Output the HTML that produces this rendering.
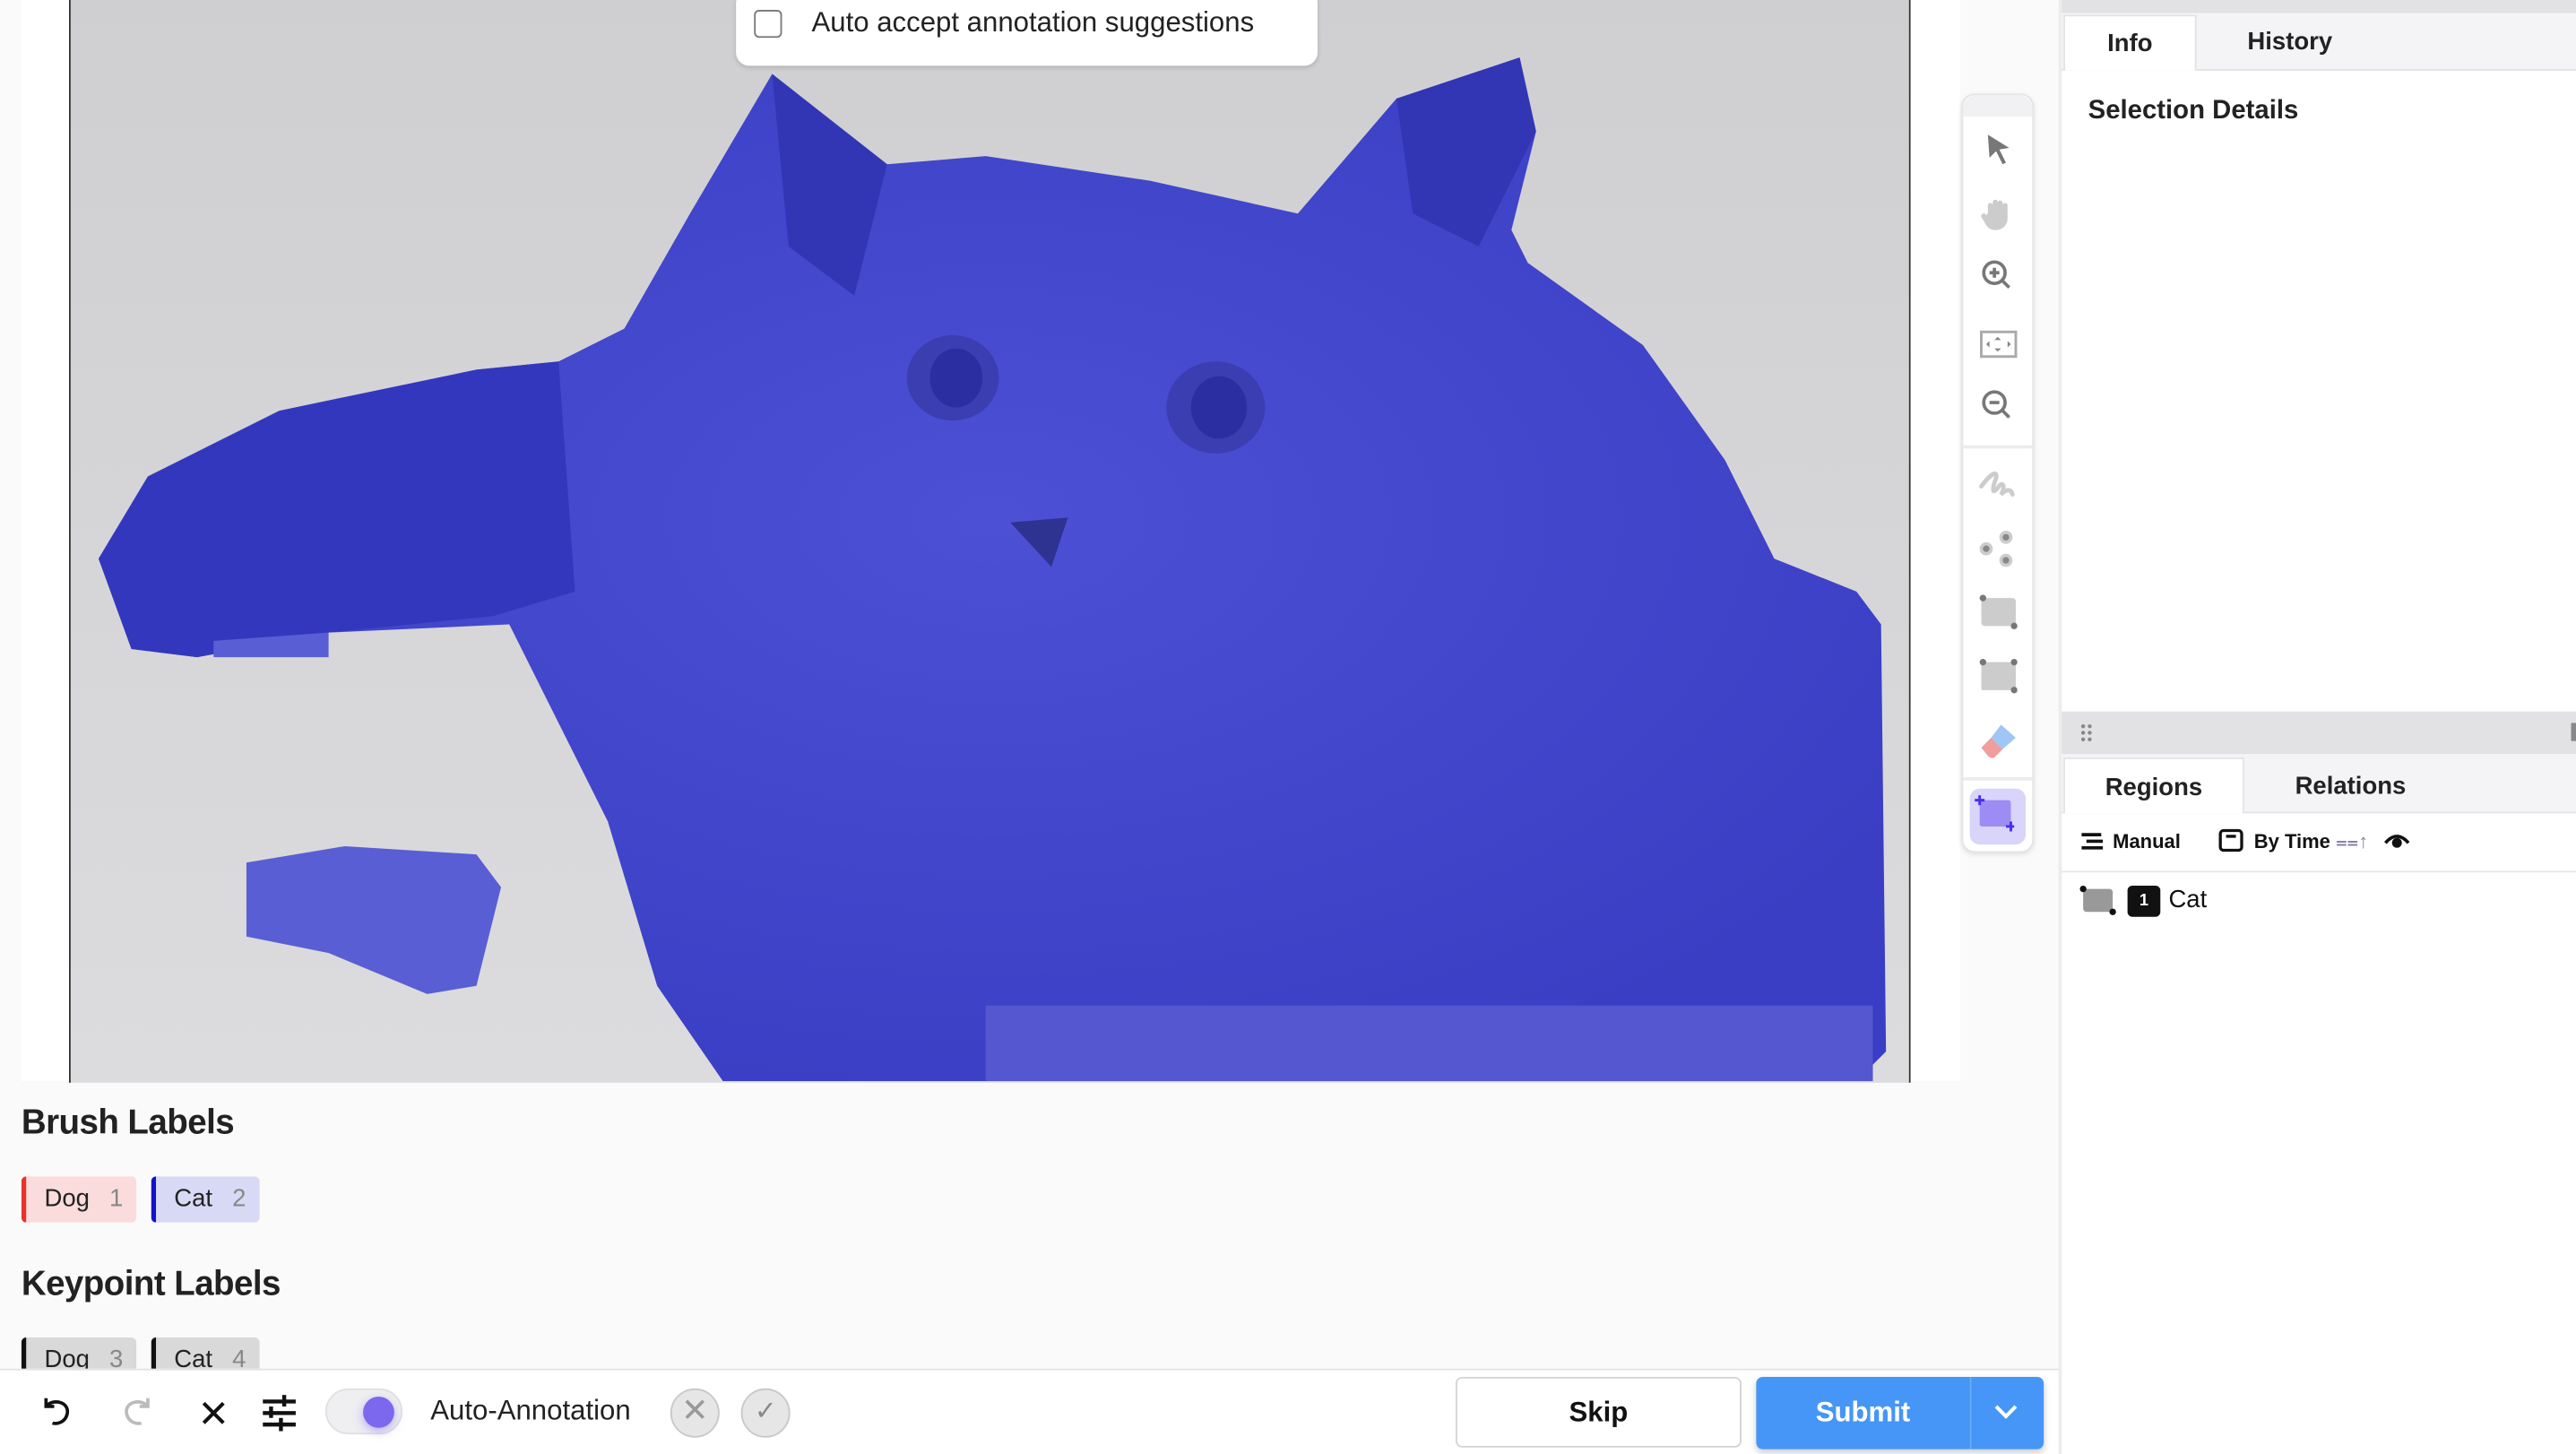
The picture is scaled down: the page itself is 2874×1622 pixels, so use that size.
<!DOCTYPE html>
<html><head><meta charset="utf-8"><style>
*{box-sizing:border-box;margin:0;padding:0}
html,body{width:2874px;height:1622px;overflow:hidden;background:#fafafa;font-family:"Liberation Sans",sans-serif}
#w{width:1568px;height:885px;transform:scale(1.83291);transform-origin:0 0;position:relative;background:#fafafa}
.a{position:absolute}
.tb{position:absolute;left:1204px;width:24px;height:24px}
.lab{position:absolute;height:28px;border-radius:3px;font-size:15px;line-height:28px;padding-left:11px;color:#222}
.lab span{color:#888;margin-left:12px}
</style></head><body><div id="w">
<div class="a" style="left:13px;top:0;width:1180px;height:658px;background:#fff"></div>
<svg class="a" style="left:42px;top:0" width="1121" height="659" viewBox="42 0 1121 659">
<defs><radialGradient id="g" cx="0.5" cy="0.45" r="0.6"><stop offset="0" stop-color="#4c50d4"/><stop offset="1" stop-color="#3a3ec4"/></radialGradient>
<linearGradient id="bg" x1="0" y1="0" x2="0" y2="1"><stop offset="0" stop-color="#cfcfd1"/><stop offset="1" stop-color="#dcdcde"/></linearGradient></defs>
<rect x="42" y="0" width="1121" height="659" fill="url(#bg)"/>
<line x1="42.5" y1="0" x2="42.5" y2="659" stroke="#333"/><line x1="1162.5" y1="0" x2="1162.5" y2="659" stroke="#333"/>
<path d="M470,45 L540,100 600,95 700,110 790,130 850,60 925,35 935,80 920,140 930,160 1000,210 1050,280 1080,340 1130,360 1145,380 1148,640 1130,658 440,658 400,600 370,500 330,420 310,380 200,385 120,400 80,395 60,340 90,290 170,250 290,225 340,220 380,200 420,130 Z" fill="url(#g)"/>
<path d="M60,340 90,290 170,250 290,225 340,220 350,360 300,375 200,385 120,400 80,395Z" fill="#3337bd"/>
<path d="M470,45 540,100 520,180 480,150Z M850,60 925,35 935,80 900,150 860,130Z" fill="#3236b4"/>
<path d="M150,525 L210,515 290,520 305,540 290,600 260,605 200,580 150,570Z" fill="#5a5ed4"/>
<path d="M130,390 200,385 200,400 130,400Z" fill="#5a5ed4"/>
<ellipse cx="580" cy="230" rx="28" ry="26" fill="#3a3eb0"/><ellipse cx="582" cy="230" rx="16" ry="18" fill="#2a2ea0"/>
<ellipse cx="740" cy="248" rx="30" ry="28" fill="#3a3eb0"/><ellipse cx="742" cy="248" rx="17" ry="19" fill="#2a2ea0"/>
<path d="M615,318 650,315 640,345Z" fill="#2e3290"/>
<rect x="600" y="612" width="540" height="46" fill="#5457cf"/>
</svg>
<div class="a" style="left:448px;top:-6px;width:354px;height:46px;background:#fff;border-radius:8px;box-shadow:0 1px 3px rgba(0,0,0,.15)"></div>
<div class="a" style="left:459px;top:6px;width:17px;height:17px;border:1.5px solid #777;border-radius:3px"></div>
<div class="a" style="left:494px;top:4px;font-size:17px;color:#222">Auto accept annotation suggestions</div>
<!-- toolbar -->
<div class="a" style="left:1194px;top:57px;width:44px;height:462px;background:#fff;border:1px solid #e5e5e8;border-radius:8px;box-shadow:0 1px 3px rgba(0,0,0,.1)"></div>
<div class="a" style="left:1195px;top:58px;width:42px;height:13px;background:#f1f1f3;border-radius:8px 8px 0 0"></div>
<div class="a" style="left:1195px;top:271px;width:42px;height:2px;background:#ececee"></div>
<div class="a" style="left:1195px;top:473px;width:42px;height:2px;background:#ececee"></div>
<svg class="tb" style="top:79px" viewBox="0 0 24 24"><path d="M6,3 L19,11 13,12 17,20 15,21 11,13 7,17Z" fill="#777"/></svg>
<svg class="tb" style="top:118px" viewBox="0 0 24 24"><path d="M6,12 V7 a1.5,1.5 0 0 1 3,0 V5 a1.5,1.5 0 0 1 3,0 V5.5 a1.5,1.5 0 0 1 3,0 V7 a1.5,1.5 0 0 1 3,0 V15 a7,7 0 0 1 -7,7 h-1 a6,6 0 0 1 -5,-3 L2,14 a1.5,1.5 0 0 1 3,-1Z" fill="#ccc"/></svg>
<svg class="tb" style="top:156px" viewBox="0 0 24 24" fill="none" stroke="#777" stroke-width="2"><circle cx="10" cy="10" r="6.5"/><path d="M15,15 L19,19 M10,7 V13 M7,10 H13"/></svg>
<svg class="tb" style="top:197px" viewBox="0 0 24 24"><rect x="2" y="5" width="21" height="15" fill="none" stroke="#aaa" stroke-width="1.6"/><path d="M12,8 l2,2 h-4Z M12,17 l2,-2 h-4Z M5,12.5 l2,-2 v4Z M20,12.5 l-2,-2 v4Z" fill="#888"/></svg>
<svg class="tb" style="top:235px" viewBox="0 0 24 24" fill="none" stroke="#777" stroke-width="2"><circle cx="10" cy="10" r="6.5"/><path d="M15,15 L19,19 M7,10 H13"/></svg>
<svg class="tb" style="top:282px" viewBox="0 0 24 24" fill="none" stroke="#ccc" stroke-width="2.6" stroke-linecap="round"><path d="M2,14 C8,6 12,4 11,9 C9,14 8,20 12,15 C15,10 17,14 14,19 C17,16 20,15 21,19"/></svg>
<svg class="tb" style="top:321px" viewBox="0 0 24 24"><circle cx="5" cy="13" r="4" fill="#ccc"/><circle cx="5" cy="13" r="2" fill="#888"/><circle cx="17" cy="6" r="4" fill="#ccc"/><circle cx="17" cy="6" r="2" fill="#888"/><circle cx="17" cy="20" r="4" fill="#ccc"/><circle cx="17" cy="20" r="2" fill="#888"/></svg>
<svg class="tb" style="top:361px" viewBox="0 0 24 24"><rect x="2" y="3" width="21" height="17" rx="2" fill="#ccc"/><circle cx="3" cy="3" r="2" fill="#777"/><circle cx="22" cy="20" r="2" fill="#777"/></svg>
<svg class="tb" style="top:400px" viewBox="0 0 24 24"><rect x="2" y="3" width="21" height="17" rx="1" fill="#ccc"/><circle cx="3" cy="3" r="2" fill="#777"/><circle cx="22" cy="3" r="2" fill="#777"/><circle cx="22" cy="20" r="2" fill="#777"/></svg>
<svg class="tb" style="top:439px" viewBox="0 0 24 24"><path d="M14,2 L23,10 15,17 8,10Z" fill="#9fc6f5"/><path d="M8,10 L15,17 10,22 Q8,23 6,21 L2,16Z" fill="#ef9d9d"/></svg>
<div class="a" style="left:1199px;top:480px;width:34px;height:34px;background:#d8d4fa;border-radius:6px"></div>
<svg class="tb" style="left:1202px;top:484px" viewBox="0 0 24 24"><rect x="3" y="3" width="19" height="16" rx="1.5" fill="#9d8cf3"/><path d="M3,0 v6 M0,3 h6 M22,16 v6 M19,19 h6" stroke="#4a2df0" stroke-width="1.6"/></svg>
<!-- labels -->
<div class="a" style="left:13px;top:672px;font-size:21px;font-weight:bold;color:#222;letter-spacing:-.3px">Brush Labels</div>
<div class="lab" style="left:13px;top:716px;width:70px;background:#f9dcdb;border-left:3px solid #e8322d">Dog<span>1</span></div>
<div class="lab" style="left:92px;top:716px;width:66px;background:#d8d9f5;border-left:3px solid #1313c8">Cat<span>2</span></div>
<div class="a" style="left:13px;top:770px;font-size:21px;font-weight:bold;color:#222;letter-spacing:-.3px">Keypoint Labels</div>
<div class="lab" style="left:13px;top:814px;width:70px;background:#d9d9d9;border-left:3px solid #111">Dog<span>3</span></div>
<div class="lab" style="left:92px;top:814px;width:66px;background:#d9d9d9;border-left:3px solid #111">Cat<span>4</span></div>
<!-- bottom bar -->
<div class="a" style="left:0;top:833px;width:1253px;height:52px;background:#fff;border-top:1px solid #e3e3e6"></div>
<svg class="a" style="left:23px;top:847px" width="24" height="24" viewBox="0 0 24 24" fill="none" stroke="#111" stroke-width="2"><path d="M5,4 v5 h5 M5,9 C9,4 19,6 18,13 C17,19 11,20 9,19"/></svg>
<svg class="a" style="left:71px;top:847px" width="24" height="24" viewBox="0 0 24 24" fill="none" stroke="#bbb" stroke-width="2"><path d="M19,4 v5 h-5 M19,9 C15,4 5,6 6,13 C7,19 13,20 15,19"/></svg>
<svg class="a" style="left:120px;top:850px" width="20" height="20" viewBox="0 0 20 20" stroke="#111" stroke-width="2.2"><path d="M4,4 L16,16 M16,4 L4,16"/></svg>
<svg class="a" style="left:159px;top:848px" width="22" height="24" viewBox="0 0 22 24" stroke="#111" stroke-width="2.4"><path d="M1,5 H21 M1,12 H21 M1,19 H21 M14,1 V8 M6,8 V15 M12,15 V23"/></svg>
<div class="a" style="left:198px;top:845px;width:47px;height:28px;background:#efeff1;border-radius:14px;border:1px solid #e0e0e3"></div>
<div class="a" style="left:221px;top:850px;width:19px;height:19px;background:#7b68ee;border-radius:50%;box-shadow:0 2px 6px rgba(123,104,238,.5)"></div>
<div class="a" style="left:262px;top:849px;font-size:17px;color:#222">Auto-Annotation</div>
<div class="a" style="left:408px;top:845px;width:30px;height:30px;border-radius:50%;background:#e6e6e6;border:1px solid #c8c8c8;color:#999;font-size:20px;text-align:center;line-height:27px">✕</div>
<div class="a" style="left:451px;top:845px;width:30px;height:30px;border-radius:50%;background:#e6e6e6;border:1px solid #c8c8c8;color:#888;font-size:16px;text-align:center;line-height:28px">✓</div>
<div class="a" style="left:886px;top:838px;width:174px;height:43px;border:1px solid #d3d3d3;border-radius:4px;background:#fff;font-size:17px;font-weight:bold;text-align:center;line-height:41px;color:#111">Skip</div>
<div class="a" style="left:1069px;top:838px;width:175px;height:44px;border-radius:4px;background:#4596f6;box-shadow:0 2px 4px rgba(0,0,0,.2)"></div>
<div class="a" style="left:1069px;top:838px;width:130px;height:44px;font-size:17px;font-weight:bold;text-align:center;line-height:44px;color:#fff">Submit</div>
<div class="a" style="left:1199px;top:838px;width:1px;height:44px;background:#6aa9f4"></div>
<svg class="a" style="left:1213px;top:853px" width="16" height="12" viewBox="0 0 16 12" fill="none" stroke="#fff" stroke-width="2.2"><path d="M2,3 L8,9 14,3"/></svg>
<!-- right panel -->
<div class="a" style="left:1253px;top:0;width:315px;height:885px;background:#fff;border-left:2px solid #ececee"></div>
<div class="a" style="left:1255px;top:0;width:313px;height:8px;background:#e2e2e5"></div>
<div class="a" style="left:1255px;top:8px;width:313px;height:35px;background:#f4f4f6;border-bottom:1px solid #e3e3e6"></div>
<div class="a" style="left:1256px;top:9px;width:81px;height:34px;background:#fff;border:1px solid #e3e3e6;border-bottom:none;font-size:15px;font-weight:bold;text-align:center;line-height:33px;color:#222">Info</div>
<div class="a" style="left:1368px;top:17px;font-size:15px;font-weight:bold;color:#222">History</div>
<div class="a" style="left:1271px;top:59px;font-size:16px;font-weight:bold;color:#222">Selection Details</div>
<div class="a" style="left:1255px;top:433px;width:313px;height:26px;background:#e2e2e5"></div>
<svg class="a" style="left:1266px;top:440px" width="8" height="12"><g fill="#888"><circle cx="2" cy="2" r="1.2"/><circle cx="6" cy="2" r="1.2"/><circle cx="2" cy="6" r="1.2"/><circle cx="6" cy="6" r="1.2"/><circle cx="2" cy="10" r="1.2"/><circle cx="6" cy="10" r="1.2"/></g></svg>
<div class="a" style="left:1565px;top:440px;width:3px;height:11px;background:#888"></div>
<div class="a" style="left:1255px;top:459px;width:313px;height:36px;background:#f4f4f6;border-bottom:1px solid #e3e3e6"></div>
<div class="a" style="left:1256px;top:461px;width:110px;height:34px;background:#fff;border:1px solid #e3e3e6;border-bottom:none;font-size:15px;font-weight:bold;text-align:center;line-height:35px;color:#222">Regions</div>
<div class="a" style="left:1397px;top:470px;font-size:15px;font-weight:bold;color:#222">Relations</div>
<svg class="a" style="left:1267px;top:506px" width="14" height="12" stroke="#111" stroke-width="2"><path d="M0,2 H12 M3,6 H13 M0,10 H13"/></svg>
<div class="a" style="left:1286px;top:505px;font-size:12px;font-weight:bold;color:#111">Manual</div>
<svg class="a" style="left:1350px;top:504px" width="16" height="16" fill="none" stroke="#111" stroke-width="1.8"><rect x="1.5" y="1.5" width="13" height="12" rx="2"/><path d="M5,5 H11"/></svg>
<div class="a" style="left:1372px;top:505px;font-size:12px;font-weight:bold;color:#111">By Time <span style="color:#8a7fa8;font-weight:normal">⩵↑</span></div>
<svg class="a" style="left:1451px;top:506px" width="16" height="12"><path d="M1,7 Q8,-1 15,7" fill="none" stroke="#111" stroke-width="2"/><circle cx="8" cy="7" r="3" fill="#111"/></svg>
<div class="a" style="left:1255px;top:530px;width:313px;height:1px;background:#e6e6e8"></div>
<div class="a" style="left:1268px;top:541px;width:18px;height:14px;background:#999;border-radius:2px"></div>
<div class="a" style="left:1266px;top:539px;width:4px;height:4px;background:#111;border-radius:50%"></div>
<div class="a" style="left:1284px;top:553px;width:4px;height:4px;background:#111;border-radius:50%"></div>
<div class="a" style="left:1295px;top:539px;width:20px;height:19px;background:#111;border-radius:3px;color:#fff;font-size:10px;font-weight:bold;text-align:center;line-height:19px">1</div>
<div class="a" style="left:1320px;top:539px;font-size:15px;color:#111">Cat</div>
</div></body></html>
